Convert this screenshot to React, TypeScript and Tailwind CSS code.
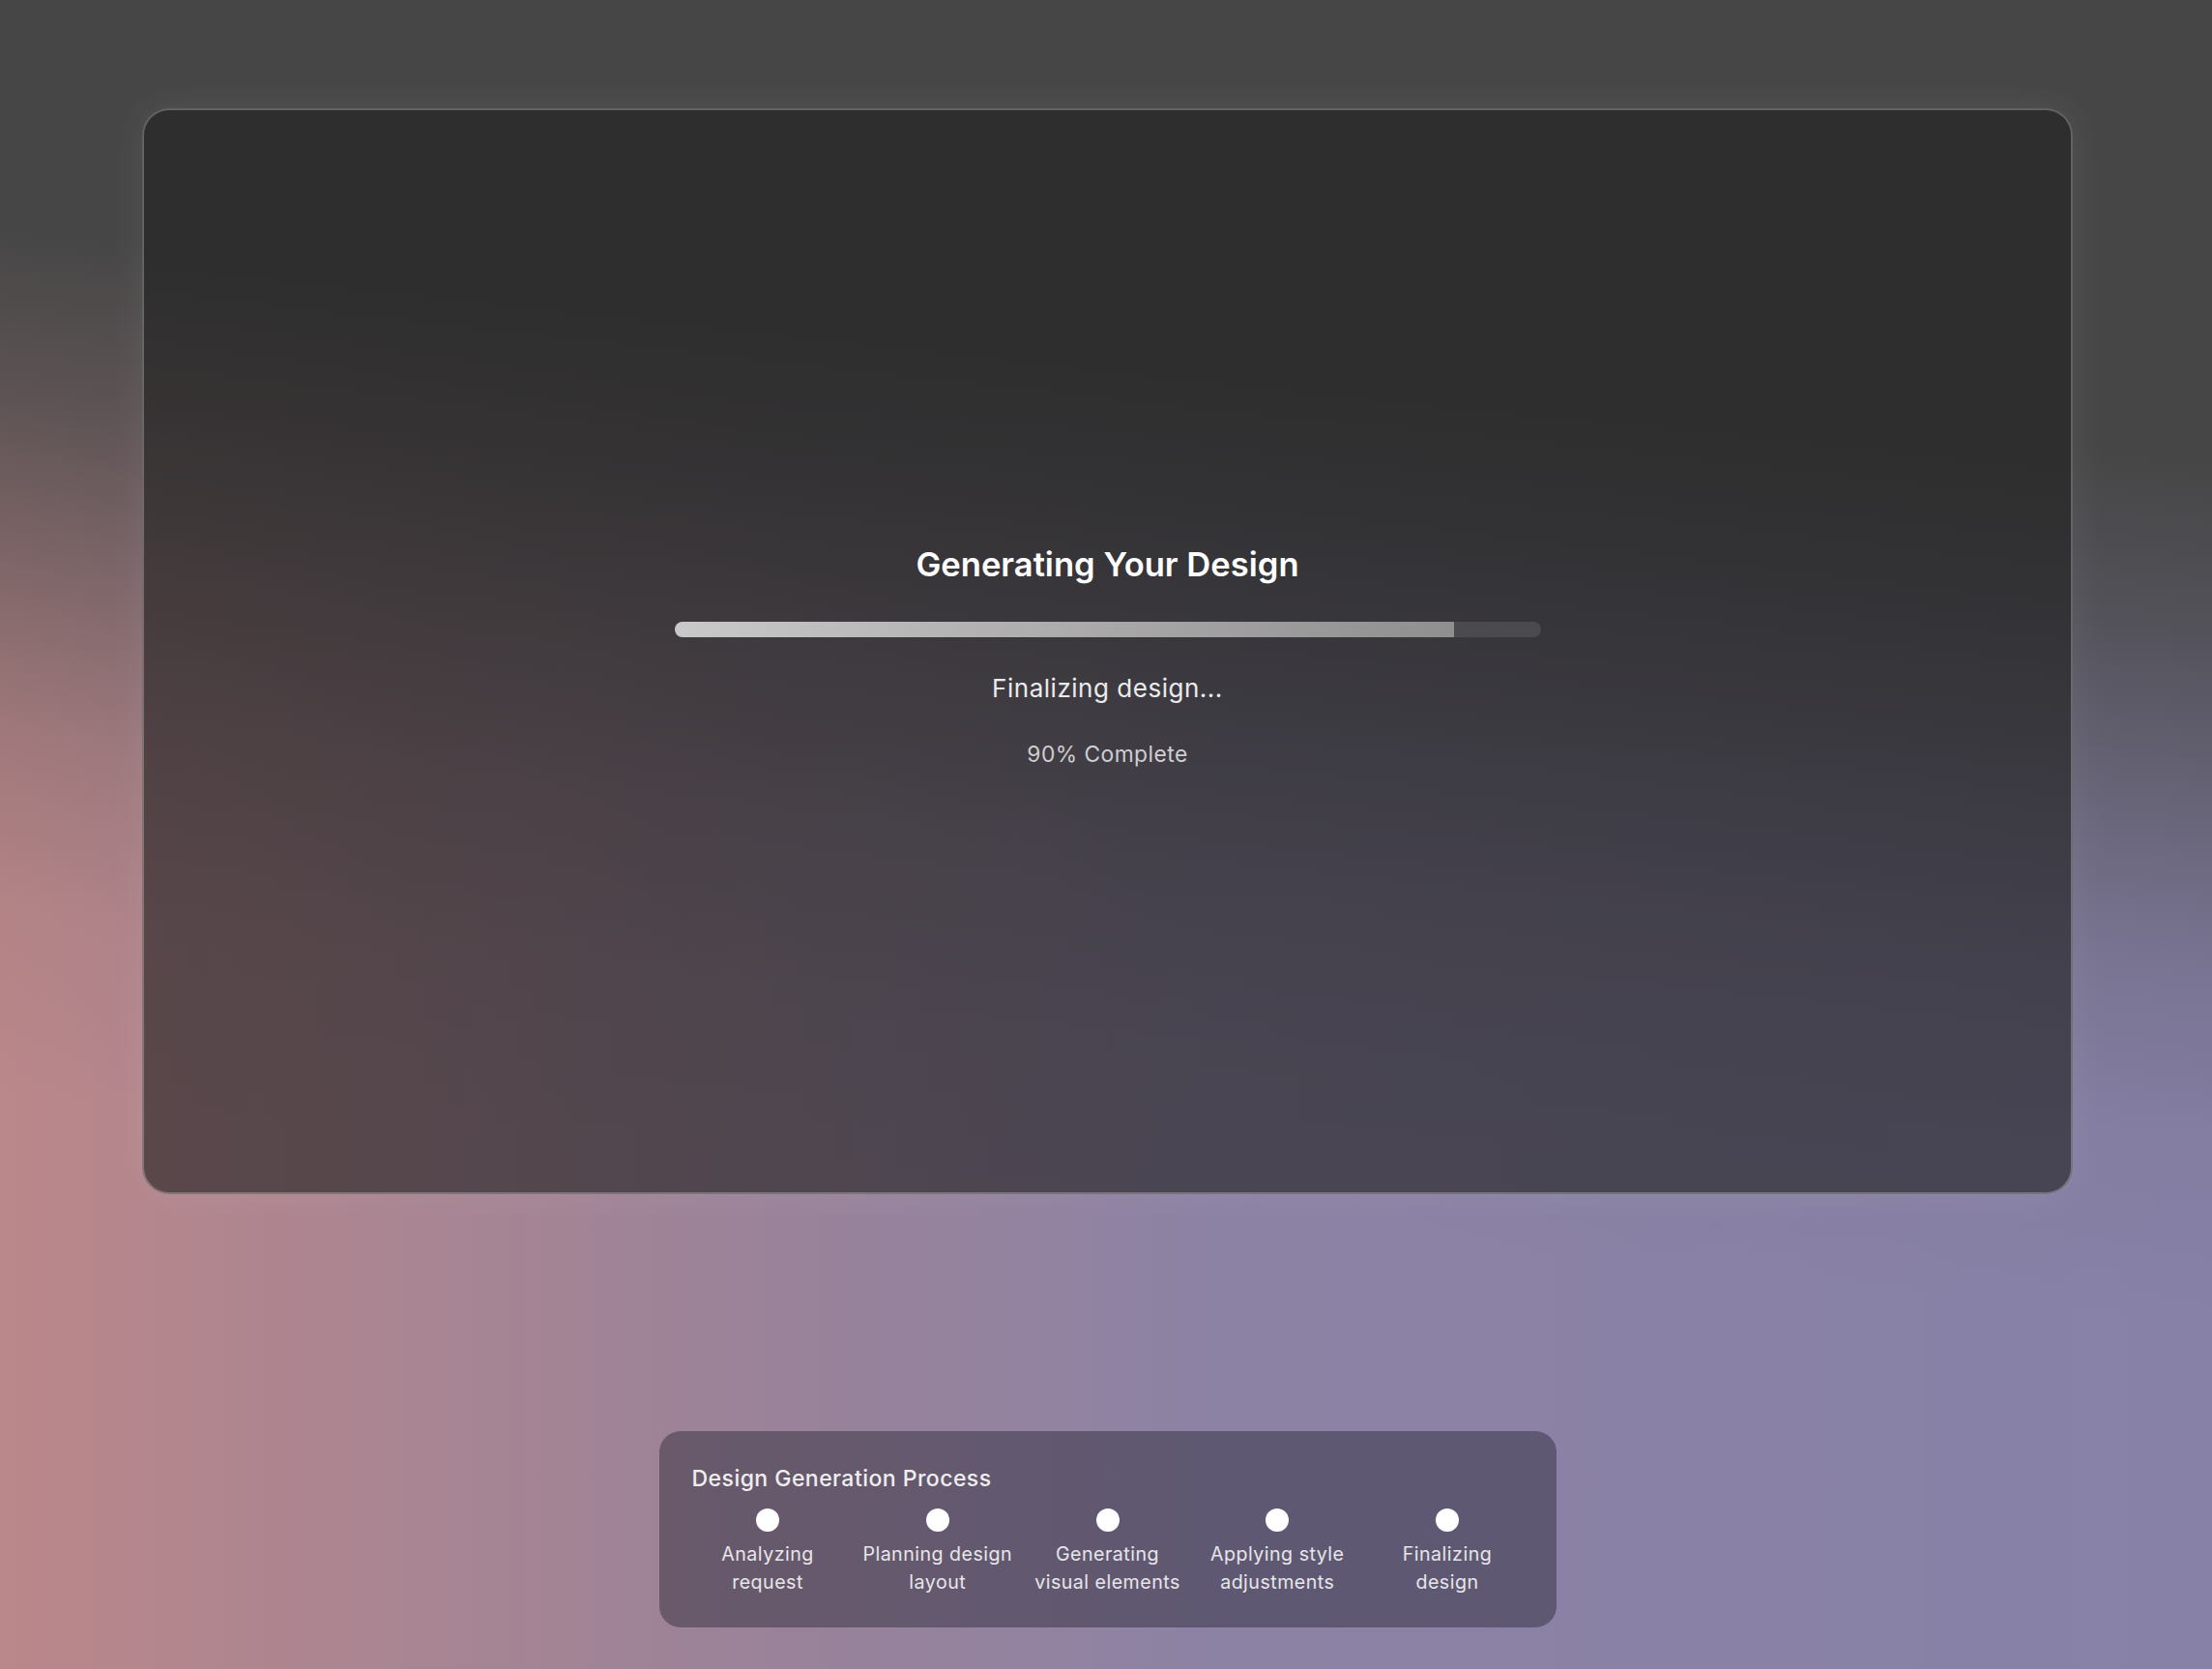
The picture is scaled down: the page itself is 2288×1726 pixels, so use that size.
import React from "react";

const steps = [
  ["Analyzing", "request"],
  ["Planning design", "layout"],
  ["Generating", "visual elements"],
  ["Applying style", "adjustments"],
  ["Finalizing", "design"],
];

const progress = 90;

export default function App() {
  return (
    <div className="min-h-screen w-full pl-[3px] flex flex-col items-center font-['Inter',sans-serif] bg-[linear-gradient(186deg,#464646_0%,#464646_24%,#464646cc_33%,#46464680_42%,#46464638_51%,#4646460f_60%,#46464600_70%),linear-gradient(to_right,#ba878a_0%,#9e8397_30%,#8c82a4_55%,#8781a8_100%)]">
      <div className="mt-[112px] w-[1997px] h-[1123px] pt-3 rounded-[28px] border-2 border-white/25 bg-[#1e1e1e]/60 shadow-[0_0_40px_rgba(255,255,255,0.08)] flex flex-col items-center justify-center">
        <h1 className="text-[34.6px] leading-[40px] font-semibold text-white">
          Generating Your Design
        </h1>
        <div className="mt-10 w-[896px] h-4 rounded-full bg-white/10 overflow-hidden">
          <div
            className="h-full bg-gradient-to-r from-[#c9c9c9] to-[#8f8f8f]"
            style={{ width: `${progress}%` }}
          />
        </div>
        <p className="mt-[37px] text-[26px] leading-8 tracking-[0.02em] text-white/90">
          Finalizing design...
        </p>
        <p className="mt-9 text-[22.8px] leading-8 tracking-[0.02em] text-white/75">
          {progress}% Complete
        </p>
      </div>

      <div className="mt-[245px] w-[928px] rounded-[22px] bg-[#282535]/45 px-[34px] pt-[34px] pb-[32px]">
        <h2 className="text-[23px] leading-[30px] font-medium tracking-[0.02em] text-white/90">
          Design Generation Process
        </h2>
        <div className="mt-4 flex justify-between">
          {steps.map((s, i) => (
            <div key={i} className="w-[157px] flex flex-col items-center">
              <div className="w-6 h-6 rounded-full bg-white" />
              <div className="mt-[9px] text-center text-[19.6px] leading-[29px] tracking-[0.025em] text-white/85 whitespace-nowrap">
                {s[0]}
                <br />
                {s[1]}
              </div>
            </div>
          ))}
        </div>
      </div>
    </div>
  );
}
